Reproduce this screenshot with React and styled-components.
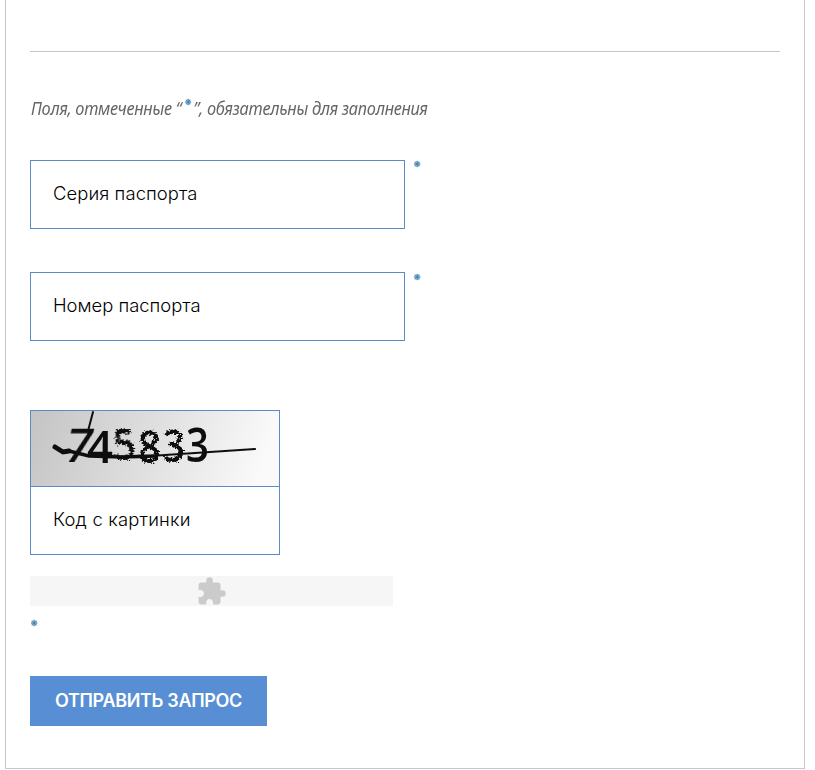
import React from "react";
import styled, { createGlobalStyle } from "styled-components";

const GlobalStyle = createGlobalStyle`
  *, *::before, *::after { box-sizing: border-box; }
  body { margin: 0; background: #fff; overflow: hidden; }
`;

const Panel = styled.main`
  width: 800px;
  height: 769px;
  margin-left: 5px;
  padding: 51px 24px 0;
  border: 1px solid #c8c8ca;
  border-top: 0;
  font-family: Inter, "Liberation Sans", sans-serif;
`;

const Divider = styled.hr`
  height: 1px;
  margin: 0;
  border: 0;
  background: #c6c6c6;
`;

const Note = styled.p`
  width: max-content;
  height: 24px;
  margin: 44px 0 40px;
  padding-left: 1px;
  font: italic 17.5px/24px "Noto Sans", sans-serif;
  letter-spacing: -0.3px;
  color: #666;
  white-space: nowrap;
  transform: scaleX(${(p) => p.$stretch});
  transform-origin: left;
`;

const Star = styled.svg`
  display: block;
  width: 8px;
  height: 8px;
  margin: ${(p) => p.$margin || "0"};
`;

const NoteStar = styled(Star)`
  display: inline-block;
  vertical-align: 9px;
  margin: 0 2px 0 3px;
`;

const FieldRow = styled.div`
  display: flex;
  align-items: flex-start;
  height: 69px;
  margin-bottom: ${(p) => p.$gap}px;
`;

const Field = styled.label`
  display: flex;
  align-items: center;
  width: ${(p) => p.$width}px;
  height: 69px;
  padding: 0 22px 4px;
  border: 1px solid #5b8bc5;
  font-size: 18.4px;
  font-weight: 300;
  color: #000;
`;

const FieldText = styled.span`
  letter-spacing: ${(p) => p.$tracking}px;
  white-space: nowrap;
`;

const Captcha = styled.div`
  width: 250px;
  border: 1px solid #5b8bc5;
  border-bottom: 0;
  height: 76px;
`;

const CaptchaImage = styled.svg`
  display: block;
  width: 248px;
  height: 75px;
  font-family: "Open Sans", "Noto Sans", sans-serif;
  font-weight: 600;
`;

const PluginSlot = styled.div`
  display: flex;
  width: 363px;
  height: 30px;
  margin: 21px 0 13px;
  padding-left: 166px;
  background: #f6f6f6;
`;

const PuzzleIcon = styled.svg`
  width: 31px;
  height: 31px;
  fill: #cbcbcb;
`;

const SubmitButton = styled.button`
  display: flex;
  align-items: center;
  justify-content: center;
  width: 237px;
  height: 50px;
  margin-top: 49px;
  padding: 0;
  border: 0;
  background: #578ed4;
  color: #fff;
  font: 600 18px/24px Inter, "Liberation Sans", sans-serif;
  letter-spacing: ${(p) => p.$tracking}px;
  white-space: nowrap;
`;

const StarShape = () => (
  <>
    <circle cx="4.2" cy="4" r="3.1" fill="#a5cbe4" />
    <path d="M4.2 .8v6.4M1 4h6.4M2 1.8l4.400 4.400M6.400 1.800L2 6.200" stroke="#437eac" strokeWidth="0.9" />
  </>
);

const digits = [
  { value: "7", x: 32, y: 51, size: 46, width: 26, skew: -12, rough: false },
  { value: "4", x: 56, y: 52, size: 45, width: 26, skew: 0, rough: false },
  { value: "5", x: 83, y: 49, size: 44, width: 23, skew: 4, rough: true },
  { value: "8", x: 107, y: 52, size: 46, width: 23, skew: 0, rough: true },
  { value: "3", x: 132, y: 51, size: 46, width: 22, skew: 0, rough: true },
  { value: "3", x: 155, y: 51, size: 47, width: 23, skew: 0, rough: false },
];

function CaptchaPicture() {
  return (
    <CaptchaImage viewBox="0 0 248 75">
      <defs>
        <linearGradient id="paper" x1="0" x2="1" y1="0" y2="0.1">
          <stop offset="0" stopColor="#c4c4c4" />
          <stop offset="0.5" stopColor="#dedede" />
          <stop offset="1" stopColor="#fafafa" />
        </linearGradient>
        <filter id="rough" x="-20%" y="-20%" width="140%" height="140%">
          <feTurbulence type="fractalNoise" baseFrequency="0.5" numOctaves="2" seed="4" />
          <feDisplacementMap in="SourceGraphic" scale="7" xChannelSelector="R" yChannelSelector="G" />
          <feGaussianBlur stdDeviation="0.7" />
        </filter>
        <filter id="soft" x="-20%" y="-20%" width="140%" height="140%">
          <feGaussianBlur stdDeviation="0.6" />
        </filter>
      </defs>
      <rect width="248" height="75" fill="url(#paper)" />
      {digits.map((d, i) => (
        <text
          key={i}
          transform={`translate(${d.x} ${d.y}) skewX(${d.skew})`}
          fontSize={d.size}
          textLength={d.width}
          lengthAdjust="spacingAndGlyphs"
          fill="#0b0b0b"
          filter={d.rough ? "url(#rough)" : "url(#soft)"}
        >
          {d.value}
        </text>
      ))}
      <g fill="none" stroke="#111" strokeLinecap="round" filter="url(#soft)">
        <path d="M24 36L32 41 38 40" strokeWidth="5" />
        <path d="M38 40L58 45 90 46 125 45" strokeWidth="3.4" />
        <path d="M119 45L224 38" strokeWidth="2.2" />
        <path d="M62 1L57 20" strokeWidth="2" />
      </g>
    </CaptchaImage>
  );
}

export default function App() {
  return (
    <>
      <GlobalStyle />
      <Panel>
        <Divider />
        <Note $stretch={0.935}>
          Поля, отмеченные “<NoteStar viewBox="0 0 8 8"><StarShape /></NoteStar>”, обязательны для заполнения
        </Note>
        <FieldRow $gap={43}>
          <Field $width={375}><FieldText $tracking={0.1}>Серия паспорта</FieldText></Field>
          <Star viewBox="0 0 8 8" $margin="0 0 0 8px"><StarShape /></Star>
        </FieldRow>
        <FieldRow $gap={69}>
          <Field $width={375}><FieldText $tracking={0}>Номер паспорта</FieldText></Field>
          <Star viewBox="0 0 8 8" $margin="1px 0 0 8px"><StarShape /></Star>
        </FieldRow>
        <Captcha><CaptchaPicture /></Captcha>
        <Field $width={250}><FieldText $tracking={0.2}>Код с картинки</FieldText></Field>
        <PluginSlot>
          <PuzzleIcon viewBox="0 0 24 24">
            <path d="M20.5 11H19V7c0-1.100-.9-2-2-2h-4V3.500a2.500 2.500 0 0 0-5 0V5H4c-1.100 0-1.990.9-1.990 2v3.800H3.500c1.490 0 2.700 1.210 2.700 2.700s-1.210 2.700-2.700 2.700H2V20c0 1.100.9 2 2 2h3.800v-1.500c0-1.490 1.210-2.700 2.700-2.700s2.700 1.210 2.700 2.700V22H17c1.100 0 2-.9 2-2v-4h1.500a2.500 2.500 0 0 0 0-5z" />
          </PuzzleIcon>
        </PluginSlot>
        <Star viewBox="0 0 8 8"><StarShape /></Star>
        <SubmitButton type="button" $tracking={-0.34}>ОТПРАВИТЬ ЗАПРОС</SubmitButton>
      </Panel>
    </>
  );
}
